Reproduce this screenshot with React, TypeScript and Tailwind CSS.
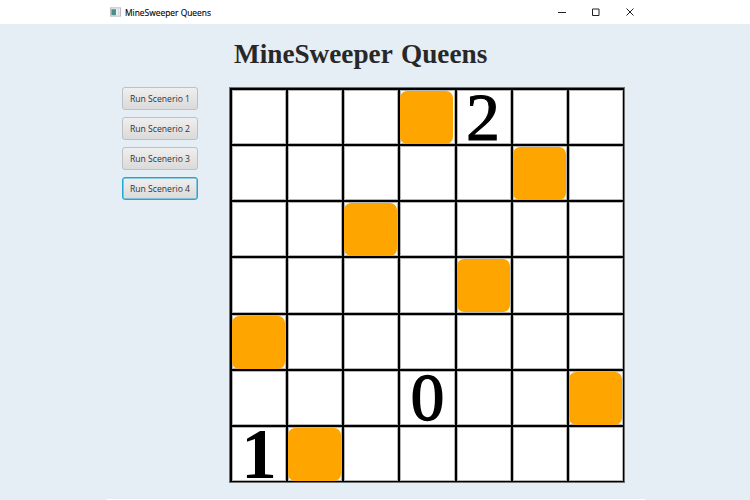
import React from "react";

const QUEENS = [3, 12, 16, 25, 28, 41, 43];
const SCENARIOS = [1, 2, 3, 4];

const DIGITS: Record<number, { text: string; style: string }> = {
  4: { text: "2", style: "text-[68px] [-webkit-text-stroke:1px_#000] leading-[55px] pr-[2px]" },
  38: { text: "0", style: "text-[67px] [-webkit-text-stroke:1.5px_#000] leading-[52px]" },
  42: { text: "1", style: "text-[71px] font-bold leading-[54px]" },
};

function Cell({ index }: { index: number }) {
  const digit = DIGITS[index];
  return (
    <div className="flex items-center bg-white shadow-[inset_0_0_0_1px_#b5b5b5]">
      {QUEENS.includes(index) && <div className="size-[53px] shrink-0 rounded-[7px] bg-[#ffa500]" />}
      {digit && (
        <span className={"mx-auto block h-[54px] font-['Liberation_Serif',serif] text-black " + digit.style}>{digit.text}</span>
      )}
    </div>
  );
}

export default function App() {
  return (
    <div className="flex h-[500px] w-[750px] flex-col overflow-hidden bg-[#e5edf5] font-['Open_Sans','Noto_Sans',sans-serif]">
      <header className="flex h-6 shrink-0 items-center bg-white pl-[110px]">
        <svg className="h-[10px] w-[11px]" viewBox="0 0 12 10">
          <rect x=".5" y=".5" width="11" height="9" fill="#f0f1f2" stroke="#b3b7bc" />
          <rect x="1.5" y="2" width="5" height="6.5" fill="#478f87" />
          <path d="M8 2.5h1.5M9.5 4v4" stroke="#c2c8cc" />
        </svg>
        <span className="ml-[4px] w-[420px] origin-left scale-x-[0.935] pt-px text-[9px] leading-6 text-black [-webkit-text-stroke:0.15px_#000]">MineSweeper Queens</span>
        <svg className="ml-3 h-6 w-[80px]" viewBox="557 0 80 24" fill="none" stroke="#222" strokeWidth="1">
          <path d="M558 12.5h8M592.5 9h6.5v6.5h-6.5zM626.5 8.5l7 7m0-7l-7 7" />
        </svg>
      </header>
      <h1 className="mt-3 ml-[234px] h-9 w-[300px] origin-left scale-x-[1.008] whitespace-nowrap font-['Liberation_Serif',serif] text-[27px] leading-9 font-bold [word-spacing:2px] text-[#282828]">
        MineSweeper Queens
      </h1>
      <main className="mt-[15px] flex pl-[122px]">
        <div className="flex w-[107px] flex-col items-start gap-[7px]">
          {SCENARIOS.map((n) => (
            <button
              key={n}
              className={
                "h-[23px] w-[76px] rounded-[3px] border bg-linear-to-b from-[#efefef] to-[#dadada] text-[9px] leading-none whitespace-nowrap text-[#333] " +
                (n === 4 ? "border-[#22a7d5] shadow-[inset_0_0_0_0.5px_#22a7d5]" : "border-[#bfc0c1]")
              }
            >
              <span className="block scale-x-[0.96]">Run Scenerio {n}</span>
            </button>
          ))}
        </div>
        <div className="grid h-[396px] w-[396px] grid-cols-[54px_54px_54px_55px_54px_54px_54px] grid-rows-[54px_54px_54px_55px_54px_54px_54px] gap-[2px] border border-[#707372] bg-black pt-[2px] pr-px pb-px pl-[2px]">
          {Array.from({ length: 49 }, (_, i) => (
            <Cell key={i} index={i} />
          ))}
        </div>
      </main>
      <footer className="mt-auto ml-[106px] h-px w-[539px] shrink-0 bg-white" />
    </div>
  );
}
